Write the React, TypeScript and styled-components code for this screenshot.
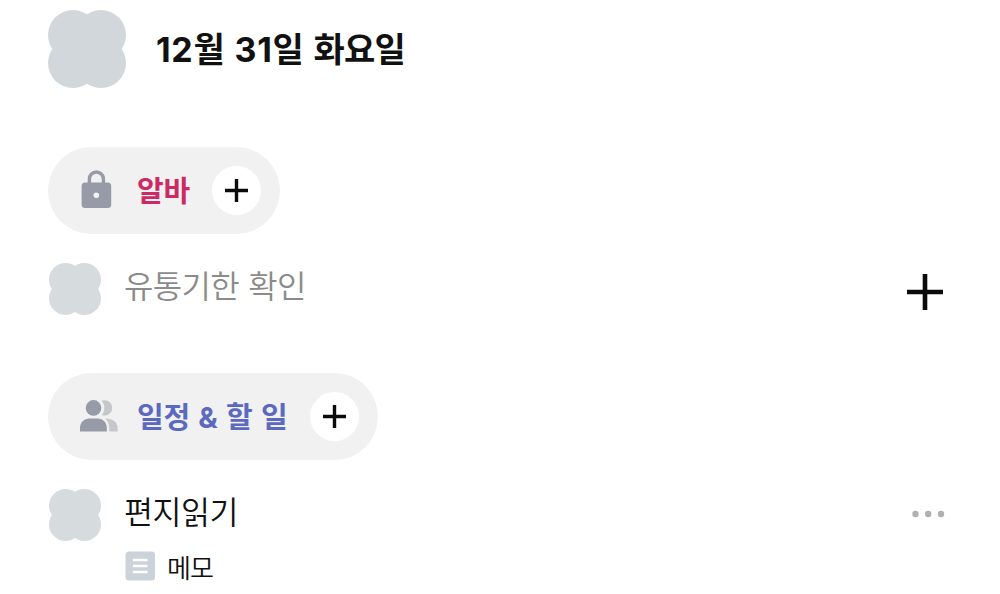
import styled, { createGlobalStyle } from "styled-components";

const colors = {
	text: "#111111",
	fadedText: "#8b8b8b",
	pill: "#f1f1f1",
	icon: "#979ba7",
	iconLight: "#c5c7cb",
	clover: "#d1d7da",
	cloverLight: "#d6dbde",
	memo: "#cbd2da",
	dots: "#b0b0b0",
	pink: "#cb2a64",
	blue: "#5b6abf",
};

const GlobalStyle = createGlobalStyle`
	* {
		box-sizing: border-box;
	}

	body {
		margin: 0;
		background: #ffffff;
		font-family: Inter, "Noto Sans CJK KR", sans-serif;
	}

	svg {
		display: block;
		flex-shrink: 0;
		overflow: visible;
	}
`;

const Page = styled.main`
	display: flex;
	flex-direction: column;
	width: 1000px;
	height: 594px;
	padding: 10px 56px 0 48px;
	overflow: hidden;
`;

const DateHeader = styled.header`
	display: flex;
	align-items: center;
	gap: 30px;
	height: 78px;
`;

const Section = styled.section`
	margin-top: 59px;
`;

const Pill = styled.div`
	display: inline-flex;
	align-items: center;
	height: 87px;
	padding: 0 19px 0 29px;
	border-radius: 44px;
	background: ${colors.pill};
	vertical-align: top;
`;

const Label = styled.span<{
	size: number;
	weight?: number;
	color?: string;
	spacing?: number;
	gap?: number;
	width?: number;
}>`
	display: block;
	width: ${({ width }) => (width ? `${width}px` : "auto")};
	color: ${({ color }) => color ?? colors.text};
	font-size: ${({ size }) => size}px;
	font-weight: ${({ weight }) => weight ?? 400};
	letter-spacing: ${({ spacing }) => spacing ?? 0}px;
	word-spacing: ${({ gap }) => gap ?? 0}px;
	line-height: 44px;
	white-space: nowrap;
`;

const DateTitle = styled(Label)`
	margin: 2px 0 0;
`;

const Digits = styled.span`
	letter-spacing: 0.7px;
`;

const PillLabel = styled(Label)`
	margin: 2px 0 0 21px;
`;

const AddButton = styled.button`
	display: flex;
	align-items: center;
	justify-content: center;
	width: 49px;
	height: 49px;
	padding: 0;
	border: 0;
	border-radius: 50%;
	background: #ffffff;
`;

const PlainButton = styled.button<{ offset?: number }>`
	display: flex;
	margin: ${({ offset }) => offset ?? 0}px 0 0 auto;
	padding: 0;
	border: 0;
	background: none;
`;

const AddTaskButton = styled(PlainButton)`
	margin-right: 1px;
`;

const TaskRow = styled.div`
	display: flex;
	align-items: center;
	height: 51px;
	margin-top: 29px;
	padding-left: 1px;
`;

const TaskLabel = styled(Label)`
	margin: -3px 0 0 23px;
`;

const MemoRow = styled.div`
	display: flex;
	align-items: center;
	gap: 12px;
	height: 30px;
	margin: 11px 0 0 77px;
`;

const MemoLabel = styled(Label)`
	margin-top: 5px;
`;

const Clover = ({ size, color }: { size: number; color: string }) => (
	<svg width={size} height={size} viewBox="0 0 78 78" fill={color}>
		<circle cx="25" cy="25" r="25" />
		<circle cx="53" cy="25" r="25" />
		<circle cx="25" cy="53" r="25" />
		<circle cx="53" cy="53" r="25" />
	</svg>
);

const Plus = ({ size, stroke }: { size: number; stroke: number }) => (
	<svg width={size} height={size} viewBox={`0 0 ${size} ${size}`} stroke="#0b0b0b" strokeWidth={stroke}>
		<path d={`M0 ${size / 2}H${size}M${size / 2} 0V${size}`} />
	</svg>
);

const LockIcon = () => (
	<svg width="39" height="40" viewBox="0 0 39 40">
		<path d="M12.4 14V8a7 7 0 0 1 14 0V14" fill="none" stroke={colors.icon} strokeWidth="3.4" />
		<rect x="4.6" y="11.5" width="29.6" height="25.5" rx="3.5" fill={colors.icon} />
		<circle cx="19.3" cy="24.2" r="2.8" fill={colors.pill} />
	</svg>
);

const PeopleIcon = () => (
	<svg width="39" height="40" viewBox="0 0 39 40">
		<g fill={colors.iconLight}>
			<path d="M24.7 3.7C30.5 2.1 35.2 6 35.2 10.9S30.5 19.7 24.7 18.1C28.3 13.8 28.3 8 24.7 3.7Z" />
			<path d="M28.2 21.5C35.7 21.5 40.7 25.3 40.7 31V34.5H32.2V31C32.2 27 31 24 28.2 21.5Z" />
		</g>
		<g fill={colors.icon}>
			<circle cx="16.5" cy="10.9" r="7.8" />
			<path d="M3 34.5V31C3 25.5 7 21.5 12.5 21.5H20.5C26 21.5 29.8 25.5 29.8 31V34.5Z" />
		</g>
	</svg>
);

const MemoIcon = () => (
	<svg width="30" height="30" viewBox="0 0 30 30">
		<rect x="0.5" y="0.5" width="29.5" height="29" rx="3.5" fill={colors.memo} />
		<path d="M7.8 9H22.5M7.8 15H22.5M7.8 21H22.5" stroke="#ffffff" strokeWidth="2.6" />
	</svg>
);

const Dots = () => (
	<svg width="33" height="8" viewBox="0 0 33 8" fill={colors.dots}>
		<circle cx="4.5" cy="4" r="3.2" />
		<circle cx="17.2" cy="4" r="3.2" />
		<circle cx="30" cy="4" r="3.2" />
	</svg>
);

const App = () => (
	<>
		<GlobalStyle />
		<Page>
			<DateHeader>
				<Clover size={78} color={colors.clover} />
				<DateTitle as="h1" size={34} weight={700} spacing={-0.8} gap={3.3}>
					<Digits>12</Digits>월 <Digits>31</Digits>일 화요일
				</DateTitle>
			</DateHeader>
			<Section>
				<Pill>
					<LockIcon />
					<PillLabel size={29} weight={700} color={colors.pink} width={75} spacing={-0.3}>알바</PillLabel>
					<AddButton aria-label="알바 추가"><Plus size={23} stroke={3.4} /></AddButton>
				</Pill>
				<TaskRow>
					<Clover size={52} color={colors.cloverLight} />
					<TaskLabel size={32} weight={350} color={colors.fadedText} spacing={-0.7} gap={1}>유통기한 확인</TaskLabel>
					<AddTaskButton aria-label="추가" offset={6}><Plus size={36} stroke={4.6} /></AddTaskButton>
				</TaskRow>
			</Section>
			<Section>
				<Pill>
					<PeopleIcon />
					<PillLabel size={29} weight={700} color={colors.blue} width={173} spacing={-0.3} gap={2}>일정 &amp; 할 일</PillLabel>
					<AddButton aria-label="일정 추가"><Plus size={23} stroke={3.4} /></AddButton>
				</Pill>
				<TaskRow>
					<Clover size={52} color={colors.cloverLight} />
					<TaskLabel size={31.5} weight={350} spacing={-0.5}>편지읽기</TaskLabel>
					<PlainButton aria-label="더보기" offset={-1}><Dots /></PlainButton>
				</TaskRow>
				<MemoRow>
					<MemoIcon />
					<MemoLabel size={26} weight={350} spacing={-0.8}>메모</MemoLabel>
				</MemoRow>
			</Section>
		</Page>
	</>
);

export default App;
